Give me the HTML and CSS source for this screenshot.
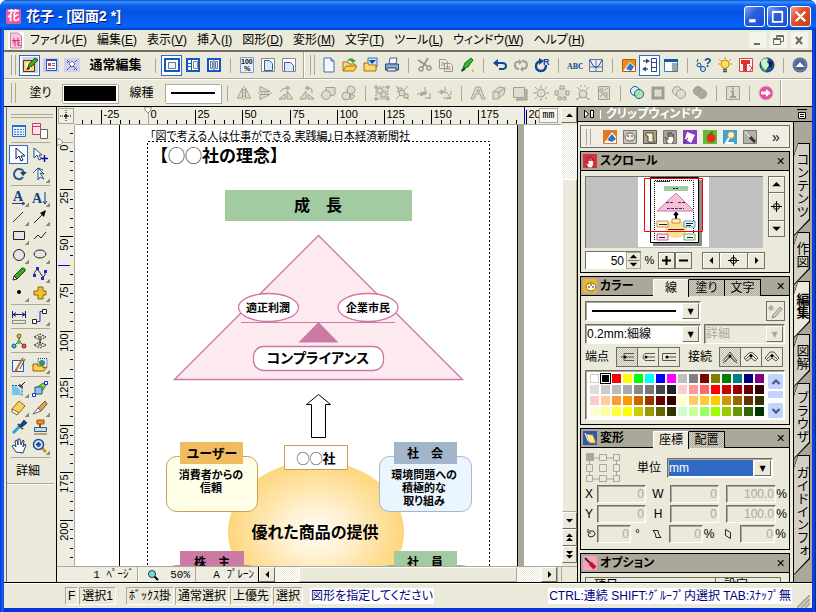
FILE: index.html
```html
<!DOCTYPE html>
<html lang="ja">
<head>
<meta charset="utf-8">
<title>花子 - [図面2 *]</title>
<link rel="stylesheet" href="styles.css">
</head>
<body>
<div class="window">
  <header class="titlebar">
    <span class="app-icon">花</span>
    <h1>花子 - [図面2 *]</h1>
    <div class="captions">
      <button class="cap" aria-label="最小化"><svg viewBox="0 0 16 16"><path d="M3 12h6" stroke="#fff" stroke-width="3"/></svg></button>
      <button class="cap" aria-label="最大化"><svg viewBox="0 0 16 16"><path d="M3.5 4v9h9V4zM3 3.5h10" fill="none" stroke="#fff" stroke-width="1.6"/></svg></button>
      <button class="cap cap-close" aria-label="閉じる"><svg viewBox="0 0 16 16"><path d="M3.500 3.500l9 9m0-9l-9 9" stroke="#fff" stroke-width="2.2"/></svg></button>
    </div>
  </header>

  <nav class="menubar">
    <span class="doc-icon"><svg viewBox="0 0 16 16"><path d="M2.500 .5h8l3 3v12h-11z" fill="#f9c9e2" stroke="#b58aa0"/><path d="M4 8h8M6 5v5m4-5v5M5 11l3-3m-1 6V9m3 0v4h3m-1-3l-3 2" stroke="#e8287d" fill="none"/></svg></span>
    <button>ファイル(<u>F</u>)</button>
    <button>編集(<u>E</u>)</button>
    <button>表示(<u>V</u>)</button>
    <button>挿入(<u>I</u>)</button>
    <button>図形(<u>D</u>)</button>
    <button>変形(<u>M</u>)</button>
    <button>文字(<u>T</u>)</button>
    <button>ツール(<u>L</u>)</button>
    <button>ウィンドウ(<u>W</u>)</button>
    <button>ヘルプ(<u>H</u>)</button>
    <div class="mdi">
      <button aria-label="文書を最小化"><svg viewBox="0 0 16 16"><path d="M5 12h6" stroke="#6b6a60" stroke-width="2"/></svg></button>
      <button aria-label="文書を元に戻す"><svg viewBox="0 0 16 16"><path d="M6.500 6V3.500h7v6H11M3.500 6.500h7v6h-7zM6 4.500h7M4 7.500h6" fill="none" stroke="#6b6a60"/></svg></button>
      <button aria-label="文書を閉じる"><svg viewBox="0 0 16 16"><path d="M5 5l6 7m0-7l-6 7" stroke="#6b6a60" stroke-width="2"/></svg></button>
    </div>
  </nav>

  <div class="toolbar toolbar-main">
    <i class="grip"></i>
    <button class="tb on" aria-label="編集モード"><svg viewBox="0 0 16 16"><path d="M0 0h16v16H0z" fill="#d5cdee"/><path d="M1.500 3.500h11v11h-11z" fill="#f6d66b" stroke="#443c20"/><path d="M4 6h5v6H4z" fill="#fff3bd"/><path d="M6 11l1-4 6-6 3 2-6 6z" fill="#3fae28" stroke="#17500c"/><path d="M4 13l2-3 2 2z" fill="#402"/></svg></button>
    <button class="tb" aria-label="表示モード"><svg viewBox="0 0 16 16"><path d="M0 1h16v14H0z" fill="#cfc6ef"/><path d="M3.500 2.500h10v11h-10z" fill="#fff" stroke="#2950b0"/><path d="M3 3h11" stroke="#2950b0" stroke-width="2"/><path d="M5 6h3v3H5z" fill="#e2403c"/><path d="M9 6.500h3M9 8.500h3M5 11.500h7" stroke="#456cc0"/></svg></button>
    <button class="tb" aria-label="図形モード"><svg viewBox="0 0 16 16"><path d="M0 1h16v14H0z" fill="#d5cdee"/><path d="M3 3l10 10M13 3L3 13M3 6l3-3M10 13l3-3" stroke="#2c569a" stroke-dasharray="3 1" fill="none"/><path d="M5 7l3-3 3 3-3 3z" fill="#fff" stroke="#567ab4"/></svg></button>
    <strong class="mode">通常編集</strong>
    <i class="sep"></i>
    <button class="tb on" aria-label="標準表示"><svg viewBox="0 0 16 16"><path d="M1 2h14v12H1z" fill="#fff" stroke="#1257c9" stroke-width="2"/><path d="M4.500 5.500h7v6h-7z" fill="#e6f0ff" stroke="#777"/></svg></button>
    <button class="tb" aria-label="見開き表示"><svg viewBox="0 0 16 16"><path d="M2 2h12v12H2z" fill="#fff" stroke="#1257c9" stroke-width="2"/><path d="M6.500 3v10M3 6.500h3M3 9.500h3" stroke="#1257c9"/><path d="M8.500 4.500h4v7h-4z" fill="#e6f0ff" stroke="#888"/></svg></button>
    <button class="tb" aria-label="二分割表示"><svg viewBox="0 0 16 16"><path d="M2 2h12v12H2z" fill="#fff" stroke="#1257c9" stroke-width="2"/><path d="M4.500 4.500h2v7h-2zM9.500 4.500h2v7h-2z" fill="#e6f0ff" stroke="#777"/><path d="M8 3v10" stroke="#1257c9"/></svg></button>
    <i class="sep"></i>
    <button class="tb" aria-label="100%表示"><svg viewBox="0 0 16 16"><path d="M1.500 .5h13v15h-13z" fill="#e4eefc" stroke="#7ea0c0"/><text x="2" y="7" font-size="7" font-weight="700" fill="#111">100</text><text x="5" y="14" font-size="7" font-weight="700" fill="#111">%</text></svg></button>
    <button class="tb" aria-label="全体表示"><svg viewBox="0 0 16 16"><path d="M1.500 1.500h13v13h-13z" fill="#fff" stroke="#888"/><path d="M4.500 3.500h5l3 3v7h-8z" fill="#dbe9fb" stroke="#31629f"/></svg></button>
    <button class="tb" aria-label="幅で表示"><svg viewBox="0 0 16 16"><path d="M1.500 1.500h13v13h-13z" fill="#fff" stroke="#888"/><path d="M3.500 14V5.500h6l3 3V14" fill="#dbe9fb" stroke="#31629f"/></svg></button>
    <i class="edge"></i>
    <i class="grip"></i>
    <button class="tb" aria-label="新規作成"><svg viewBox="0 0 16 16"><path d="M3 1h7l3 3v11H3z" fill="#f4f9ff" stroke="#3a6cb4"/><path d="M10 1v3h3" fill="#a9c6ea" stroke="#3a6cb4"/></svg></button>
    <button class="tb" aria-label="開く"><svg viewBox="0 0 16 16"><path d="M1 14V5h5l1 2h6v3" fill="#f7dd83" stroke="#a86c1c"/><path d="M1 14l3-5h11l-3 5z" fill="#ffd149" stroke="#a86c1c"/><path d="M5 4c2-4 6-3 7-1h2l-3 3-3-3h2" fill="#35a22b"/></svg></button>
    <button class="tb" aria-label="保存"><svg viewBox="0 0 16 16"><path d="M5 1h9v9H5z" fill="#cfe4ff" stroke="#3f72b8"/><path d="M6 3l3 4 4-4z" fill="#0a4c9c"/><path d="M1 14V6h4l1 2h7v6z" fill="#ffd866" stroke="#a86c1c"/></svg></button>
    <button class="tb" aria-label="印刷"><svg viewBox="0 0 16 16"><path d="M5 7l1-6h7l-1 6z" fill="#eff5ff" stroke="#4467a0"/><path d="M1.500 7h13v6h-13z" fill="#8da8cf" stroke="#2d4673"/><path d="M3 11h9v3H3z" fill="#e9f0fb" stroke="#2d4673"/></svg></button>
    <i class="sep"></i>
    <button class="tb" aria-label="切り取り"><svg viewBox="0 0 16 16"><path d="M1 3l9 6M5 11l6-10" stroke="#9b988b" stroke-width="2"/><circle cx="4" cy="12" r="2" fill="none" stroke="#9b988b" stroke-width="1.5"/><circle cx="12" cy="11" r="2" fill="none" stroke="#9b988b" stroke-width="1.5"/></svg></button>
    <button class="tb" aria-label="コピー"><svg viewBox="0 0 16 16"><path d="M1.500 2.500h6l2 2v7h-8zM6.500 6.500h6l2 2v6h-8z" fill="#eceadf" stroke="#9b988b"/><path d="M3 6h4M3 8h3M8 10h4M8 12h5" stroke="#9b988b"/></svg></button>
    <button class="tb" aria-label="書式取得"><svg viewBox="0 0 16 16"><path d="M4 11l2-5 6-5 2 2-5 7z" fill="#3cb436" stroke="#17701a"/><path d="M2 13l3-3 2 2-4 3z" fill="#125c18"/><path d="M13 12l2 2-2 1z" fill="#e0a010"/></svg></button>
    <i class="sep"></i>
    <button class="tb" aria-label="元に戻す"><svg viewBox="0 0 16 16"><path d="M3 6h7q4 0 4 3t-4 3H7" fill="none" stroke="#0b4b94" stroke-width="2"/><path d="M1 6l5-4v8z" fill="#0b4b94"/></svg></button>
    <button class="tb" aria-label="やり直し"><svg viewBox="0 0 16 16"><path d="M7 5Q2 4 2 8t4 4m3-8q5 0 5 4t-5 4" fill="none" stroke="#a19e91" stroke-width="2"/><path d="M6 2l3 3-3 3zM10 9v6l-3-3z" fill="#a19e91"/></svg></button>
    <button class="tb" aria-label="再実行"><svg viewBox="0 0 16 16"><path d="M7 4Q2 5 2 9q0 5 5 5t5-6" fill="none" stroke="#0b4b94" stroke-width="2.4"/><path d="M5 1l5 3-5 4z" fill="#0b4b94"/><text x="9" y="8" font-size="9" font-weight="700" fill="#0b4b94">R</text></svg></button>
    <i class="sep"></i>
    <button class="tb" aria-label="スペルチェック"><svg viewBox="0 0 18 16"><text x="0" y="12" class="serif" font-size="9" font-weight="700" fill="#0b4b94">ABC</text></svg></button>
    <button class="tb" aria-label="グラフ"><svg viewBox="0 0 16 16"><path d="M1.500 2.500h13v12h-13z" fill="#e9eef5" stroke="#68788c"/><path d="M8 3v11M2 10h12" stroke="#68788c"/><path d="M2 3q6 15 12 0" fill="none" stroke="#0b4b94"/></svg></button>
    <i class="sep"></i>
    <button class="tb" aria-label="クリップ"><svg viewBox="0 0 16 16"><path d="M1.500 2.500h13v12h-13z" fill="#f08a1c" stroke="#b75a04"/><path d="M2 14L9 5l5 5v4z" fill="#fff"/><path d="M5 12l4-6 4 4-3 4z" fill="#2c75cf"/></svg></button>
    <button class="tb on" aria-label="パネル切替"><svg viewBox="0 0 16 16"><path d="M9.500 1.500h5v13h-5zM9 5.500h6M9 10.500h6" fill="#fff" stroke="#264b88"/><path d="M1 4h4m1 8H3" stroke="#111"/><path d="M4 1.500L8 4 4 6.500zM4 9.500L0 12l4 2.500z" fill="#264b88"/></svg></button>
    <button class="tb" aria-label="ウィンドウ表示"><svg viewBox="0 0 16 16"><path d="M1.500 2.500h13v12h-13z" fill="#fff" stroke="#3977c6"/><path d="M1 3.500h14" stroke="#0d58ba" stroke-width="3"/><path d="M9 6h5v8H9z" fill="#a6a6a0"/></svg></button>
    <i class="sep"></i>
    <button class="tb" aria-label="ヘルプ"><svg viewBox="0 0 16 16"><path d="M1 5l1-3m0 5l5 4" stroke="#0b4b94" fill="none"/><circle cx="3" cy="8" r="2" fill="#cfe6fb" stroke="#0b4b94"/><circle cx="7" cy="12" r="2.500" fill="#cfe6fb" stroke="#0b4b94"/><text x="8" y="10" font-size="12" font-weight="700" fill="#0b4b94">?</text></svg></button>
    <button class="tb" aria-label="ヒント"><svg viewBox="0 0 16 16"><path d="M8 3q4 0 4 4 0 2-2 4H6q-2-2-2-4 0-4 4-4z" fill="#ffe34a" stroke="#c77e08"/><path d="M8 0v2M2 2l2 2m10-2l-2 2M1 7h2m12 0h-2" stroke="#e29110"/><path d="M6 12.500h4M6 14.500h4" stroke="#44505f" stroke-width="1.5"/></svg></button>
    <button class="tb" aria-label="チュートリアル"><svg viewBox="0 0 16 16"><path d="M1.500 1.500h13v13h-13z" fill="#fff" stroke="#d04444"/><path d="M3 3h9v4H9v7H5V7H3z" fill="#e32c33"/><path d="M11 8l3 3-2 3" fill="none" stroke="#e32c33"/></svg></button>
    <button class="tb" aria-label="インターネット"><svg viewBox="0 0 16 16"><circle cx="8" cy="8" r="7" fill="#1c56a8" stroke="#143c66"/><path d="M2 4q4-4 7-2L8 5l2 3-3 5q-5-2-5-9z" fill="#c9f3c2"/><path d="M10 3l4 3-2 5-2-2z" fill="#123"/><path d="M3 9l4 5-1 1-4-4z" fill="#55b849"/></svg></button>
    <i class="sep"></i>
    <button class="tb" aria-label="たたむ"><svg viewBox="0 0 16 16"><circle cx="8" cy="8" r="7.500" fill="#4d648f"/><circle cx="8" cy="8" r="6" fill="none" stroke="#7d90b4"/><path d="M3.500 10L8 5l4.500 5z" fill="#fff"/></svg></button>
  </div>

  <div class="toolbar toolbar-attr">
    <i class="grip"></i>
    <span class="lbl lbl-fill">塗り</span>
    <button class="sample sample-fill" aria-label="塗りの色"></button>
    <span class="lbl">線種</span>
    <button class="sample sample-line" aria-label="線の種類"></button>
    <i class="sep"></i>
    <button class="tb gray" aria-label="左右反転"><svg viewBox="0 0 16 16"><path d="M6.500 3v10h-5zM9.500 3v10h5z"/><path d="M8 1v14" stroke-dasharray="2 1"/></svg></button>
    <button class="tb gray" aria-label="上下反転"><svg viewBox="0 0 16 16"><path d="M3 6.500V1.500l10 5zM3 9.500v5l10-5z"/><path d="M1 8h14" stroke-dasharray="2 1"/></svg></button>
    <button class="tb gray" aria-label="左回転"><svg viewBox="0 0 16 16"><path d="M9 14V6l6 8zM1 14h6V9z"/><path d="M3 7q0-4 6-4M9 1v4l3-2z"/></svg></button>
    <button class="tb gray" aria-label="右回転"><svg viewBox="0 0 16 16"><path d="M7 14V6l-6 8zM9 14h6l-6-5z"/><path d="M13 8q1-6-5-5M9 1L6 3l3 2z"/></svg></button>
    <button class="tb gray" aria-label="前面へ"><svg viewBox="0 0 16 16"><path d="M6 2.500h9v7l-3 1H6z"/><circle cx="6" cy="10" r="4.500"/></svg></button>
    <button class="tb gray" aria-label="背面へ"><svg viewBox="0 0 16 16"><circle cx="10" cy="5" r="4"/><circle cx="5" cy="11" r="4"/><path d="M9 9l5 2-4 4z"/></svg></button>
    <i class="sep"></i>
    <button class="tb gray" aria-label="合成"><svg viewBox="0 0 16 16"><path d="M2 2h12v12H2z" stroke-dasharray="2 1"/><circle cx="6" cy="6" r="3"/><path d="M7 7h5v5H7zM1 1h2v2H1zM13 1h2v2h-2zM1 13h2v2H1zM13 13h2v2h-2z"/></svg></button>
    <button class="tb gray" aria-label="合成解除"><svg viewBox="0 0 16 16"><path d="M3 3h4v4H3zM9 9h4v4H9zM1 1l2 2m10-2l-4 4m-8 9l4-4m9 5l-3-3"/><circle cx="7" cy="8" r="3"/></svg></button>
    <button class="tb gray" aria-label="左揃え"><svg viewBox="0 0 16 16"><path d="M1 9h6M5 7l3 2-3 2zM9 2v8M7 7l2 3 2-3zM14 8v6M9 13h5"/></svg></button>
    <button class="tb gray" aria-label="下揃え"><svg viewBox="0 0 16 16"><path d="M1 7h5M4 5l3 2-3 2zM8 2v6h3M6 13h8M11 9l3 4-4 1M14 6v4"/></svg></button>
    <i class="sep"></i>
    <button class="tb gray" aria-label="文字変形"><svg viewBox="0 0 16 16"><path d="M1 14l5-12h4l5 12h-3l-2-5H6l-2 5zM7 7h3L8 4z"/></svg></button>
    <button class="tb gray" aria-label="立体"><svg viewBox="0 0 16 16"><path d="M2 7l6-5 6 1-1 6-6 5H2zM2 7h6v6M8 7l6-4"/></svg></button>
    <button class="tb gray" aria-label="影"><svg viewBox="0 0 16 16"><path d="M4 14.500h10.500V4" stroke-width="2"/><path d="M1.500 2.500h11v10h-11z"/></svg></button>
    <button class="tb gray" aria-label="明るさ"><svg viewBox="0 0 16 16"><circle cx="8" cy="8" r="4"/><path d="M8 0v3m0 10v3M0 8h3m10 0h3M2 2l2 2m8 8l2 2M14 2l-2 2M4 12l-2 2"/></svg></button>
    <button class="tb gray" aria-label="円形配置"><svg viewBox="0 0 16 16"><circle cx="8" cy="8" r="5" stroke-dasharray="2 2"/><path d="M6 1h4v3H6zM1 6h3v4H1zM12 6h3v4h-3zM4 12h3v3H4zM9 12h3v3H9z"/></svg></button>
    <button class="tb gray" aria-label="放射"><svg viewBox="0 0 16 16"><circle cx="8" cy="9" r="4"/><path d="M2 2l3 3M14 2l-3 3M2 15l3-3m9 3l-3-3M5 1h2m2 0h2M1 14h2m10 0h2"/></svg></button>
    <button class="tb gray" aria-label="散布"><svg viewBox="0 0 16 16"><path d="M2.500 1.500h11v13h-11z"/><path d="M4 4h3v3H4zM8 8h3v3H8zM4 12l3-4m2-3l3-2m-2 10l2-1"/></svg></button>
    <i class="sep"></i>
    <button class="tb" aria-label="型抜き"><svg viewBox="0 0 16 16"><circle cx="6" cy="6" r="4.500" fill="#d8ecf4" stroke="#185f9d"/><circle cx="10" cy="9" r="4.500" fill="#a5e2ad" fill-opacity=".8" stroke="#185f9d"/></svg></button>
    <button class="tb gray" aria-label="枠"><svg viewBox="0 0 16 16"><path d="M3 3h10v10H3z" stroke-width="3"/></svg></button>
    <button class="tb gray" aria-label="交差"><svg viewBox="0 0 16 16"><circle cx="6" cy="6" r="4.500"/><circle cx="10" cy="9" r="4.500"/></svg></button>
    <button class="tb gray solid" aria-label="結合"><svg viewBox="0 0 16 16"><circle cx="6" cy="6" r="4.500"/><circle cx="10" cy="9" r="4.500"/></svg></button>
    <i class="sep"></i>
    <button class="tb gray" aria-label="情報"><svg viewBox="0 0 16 16"><path d="M1.500 1.500h13v13h-13z"/><path d="M6 6.500h2v5M5 12h6M7 3.500h2" stroke-width="2"/></svg></button>
    <i class="sep"></i>
    <button class="tb" aria-label="次へ"><svg viewBox="0 0 16 16"><circle cx="8" cy="8" r="7" fill="#e94b9b" stroke="#c8c0d0"/><path d="M3 6.500h5V4l5 4-5 4V9.500H3z" fill="#fff"/></svg></button>
    <i class="edge"></i>
  </div>

  <main class="main">
    <aside class="tools">
      <i class="tgrip"></i>
      <div class="pair">
        <button aria-label="部品"><svg viewBox="0 0 16 16"><path d="M1.500 2.500h13v11h-13z" fill="#e8f2ff" stroke="#2e6dc4"/><path d="M1 3h14" stroke="#2e6dc4" stroke-width="2"/><path d="M3 6.500h10M3 9h10M3 11.500h10" stroke="#2e6dc4" stroke-dasharray="2 1"/></svg></button>
        <button aria-label="スタイル"><svg viewBox="0 0 16 16"><path d="M.5.5h8v11h-8zM.5 3.500h8" fill="#fbe3ea" stroke="#c9386e"/><path d="M8.500 6.500h7v9h-7z" fill="#fff" stroke="#666"/></svg></button>
      </div>
      <i class="tsep"></i>
      <div class="pair">
        <button class="on" aria-label="選択"><svg viewBox="0 0 16 16"><path d="M5 1v11l3-3 2 5 2-1-2-4h4z" fill="#fff" stroke="#111c55"/></svg></button>
        <button aria-label="追加選択"><svg viewBox="0 0 16 16"><path d="M2 1v10l3-3 2 5 2-1-2-4h3z" fill="#fff" stroke="#27518a"/><path d="M12.500 8v7M9 11.500h7" stroke="#101090" stroke-width="1.500"/></svg></button>
        <button aria-label="回転"><svg viewBox="0 0 16 16"><path d="M12 11q-2 3-5 2-4-1-4-5 1-5 5-5 4 0 5 4" fill="none" stroke="#2a5b8d" stroke-width="2"/><path d="M9 6h7l-4 4z" fill="#143f70"/></svg></button>
        <button class="more" aria-label="節点"><svg viewBox="0 0 16 16"><path d="M1 7l5-5 5 2M6 2v12l2-3 4 2-4-6 4 1z" fill="#fff" stroke="#27518a"/></svg></button>
      </div>
      <i class="tsep"></i>
      <div class="pair">
        <button class="more" aria-label="横文字"><svg viewBox="0 0 16 16"><text x="2" y="11" class="serif" font-size="14" font-weight="700" fill="#154080">A</text><path d="M1 13.500h12M11 12l3 1.500-3 1.500" stroke="#154080" fill="none"/></svg></button>
        <button class="more" aria-label="縦文字"><svg viewBox="0 0 16 16"><text x="0" y="13" class="serif" font-size="14" font-weight="700" fill="#154080">A</text><path d="M13 2v11M11 11l2 3 2-3" stroke="#154080" fill="none"/></svg></button>
        <button class="more" aria-label="直線"><svg viewBox="0 0 16 16"><path d="M2 13L12 3" stroke="#333"/></svg></button>
        <button class="more" aria-label="矢印"><svg viewBox="0 0 16 16"><path d="M2 14L11 5" stroke="#222"/><path d="M14 1L8 4l4 4z"/></svg></button>
        <button class="more" aria-label="長方形"><svg viewBox="0 0 16 16"><path d="M2.500 3.500h11v8h-11z" fill="#e4e4e4" stroke="#222"/></svg></button>
        <button aria-label="折れ線"><svg viewBox="0 0 16 16"><path d="M2 11l4-4 3 3 5-6" fill="none" stroke="#222"/></svg></button>
        <button class="more" aria-label="円"><svg viewBox="0 0 16 16"><circle cx="8" cy="8" r="5.500" fill="#e4e4e4" stroke="#222"/></svg></button>
        <button class="more" aria-label="楕円"><svg viewBox="0 0 16 16"><ellipse cx="8" cy="7" rx="6" ry="4" fill="#e4e4e4" stroke="#222"/></svg></button>
        <button aria-label="鉛筆"><svg viewBox="0 0 16 16"><path d="M3 10l8-8q4 0 3 3l-8 8z" fill="#3ea52f" stroke="#174d12"/><path d="M2 14l1-4 3 3z" fill="#fff" stroke="#222"/></svg></button>
        <button class="more" aria-label="曲線"><svg viewBox="0 0 16 16"><path d="M2 9q1-6 4-5l5 7q3-1 2-6" fill="none" stroke="#333"/><path d="M1 8h3v3H1zM4 1h3v3H4zM12 4h3v3h-3zM9 11h3v3H9z" fill="#2424e0"/></svg></button>
        <button class="more" aria-label="点"><svg viewBox="0 0 16 16"><circle cx="8" cy="7" r="2"/></svg></button>
        <button class="more" aria-label="図形部品"><svg viewBox="0 0 16 16"><path d="M6 2h5v4h3v4h-3v4H6v-4H2V6h4z" fill="#f4c32c" stroke="#93620a"/></svg></button>
      </div>
      <i class="tsep"></i>
      <div class="pair">
        <button aria-label="寸法線"><svg viewBox="0 0 16 16"><path d="M1.500 2v7M14.500 2v7M2 5.500h12M5 3.500l-3 2 3 2m6-4l3 2-3 2" stroke="#16207d" fill="none"/><path d="M1.500 11.500h13v3h-13z" fill="none" stroke="#333" stroke-dasharray="1 1"/></svg></button>
        <button class="more" aria-label="連結線"><svg viewBox="0 0 16 16"><path d="M4 12.500h4v-10h4" fill="none" stroke="#2424e0"/><path d="M.5 10.500h4v4h-4zM10.500.5h4v4h-4z" fill="#fff" stroke="#222"/></svg></button>
      </div>
      <i class="tsep"></i>
      <div class="pair">
        <button aria-label="ツリー"><svg viewBox="0 0 16 16"><path d="M8 3v5l-5 5m5-5l5 5" stroke="#333" fill="none"/><circle cx="8" cy="3" r="2" fill="#e9b93b" stroke="#7c5d14"/><circle cx="3" cy="13" r="2" fill="#4bb2dd" stroke="#185c7c"/><circle cx="13" cy="13" r="2" fill="#e05d6e" stroke="#7c1d29"/><circle cx="8" cy="9" r="2" fill="#4eb84b"/></svg></button>
        <button aria-label="階層"><svg viewBox="0 0 16 16"><path d="M2 4l6-3 6 3-6 3zM2 12l6-3 6 3-6 3z" fill="none" stroke="#222" stroke-dasharray="2 1"/><path d="M8 5v6M6 4h4M6 12h4" stroke="#222"/></svg></button>
      </div>
      <i class="tsep"></i>
      <div class="pair">
        <button aria-label="ペイント"><svg viewBox="0 0 16 16"><path d="M1.500 3.500h11v11h-11z" fill="#eef4fb" stroke="#275b9b"/><path d="M5 13L12 1" stroke="#c97422" stroke-width="2"/><path d="M4 12l3 2-3 1z" fill="#d13b3b"/><path d="M9 12l5-10" stroke="#395f91"/></svg></button>
        <button class="more" aria-label="画像枠"><svg viewBox="0 0 16 16"><path d="M6 1.500h9v9H6z" fill="none" stroke="#2424e0" stroke-dasharray="1 1"/><circle cx="10" cy="6" r="3" fill="#2b9b5a"/><path d="M1 14V7h4l1 2h5v2l4-1-3 4z" fill="#ffd24c" stroke="#98610b"/></svg></button>
      </div>
      <i class="tsep"></i>
      <div class="pair">
        <button class="more" aria-label="面取り"><svg viewBox="0 0 16 16"><path d="M1 5q9 0 9 9H1z" fill="#6fc7ef"/><path d="M1 4.500h10v10" fill="none" stroke="#1a4f8a" stroke-dasharray="2 1"/><path d="M14 1L9 6m0-3v3h3" stroke="#111" fill="none"/></svg></button>
        <button aria-label="変形"><svg viewBox="0 0 16 16"><path d="M3 8l8-6 3 2-5 8z" fill="#8ecf4f" stroke="#41721a"/><path d="M3 6h7v7H3z" fill="#8dc6e6" stroke="#235a7d"/><path d="M.5 12.500h3v3h-3zM12.500.5h3v3h-3z" fill="#fff" stroke="#2424e0"/></svg></button>
        <button class="more" aria-label="消しゴム"><svg viewBox="0 0 16 16"><path d="M1 9l7-8 6 5-7 8z" fill="#f9d45c" stroke="#8b671a"/><path d="M1 9v3l5 3 1-1V12z" fill="#fff" stroke="#8b671a"/></svg></button>
        <button class="more" aria-label="カッター"><svg viewBox="0 0 16 16"><path d="M6 8l7-7 2 3-6 7z" fill="#d9a55b" stroke="#7d5621"/><path d="M1 14l5-6 3 3z" fill="#fff" stroke="#666"/></svg></button>
        <button aria-label="スポイト"><svg viewBox="0 0 16 16"><path d="M2 14l7-7" stroke="#29a9c8" stroke-width="3"/><path d="M7 5l5 5M9 7l4-5 2 2-5 4z" stroke="#1d4174" stroke-width="2" fill="#2d5e9c"/></svg></button>
        <button aria-label="スタンプ"><svg viewBox="0 0 16 16"><path d="M5 1h7v4H5z" fill="#f38f31" stroke="#9f4e0b"/><path d="M8 5v4" stroke="#9f4e0b" stroke-width="2"/><path d="M2.500 8.500h12v4h-12z" fill="#bfe0f2" stroke="#2b5c83"/><path d="M2 15h13" stroke="#8a5428"/></svg></button>
        <button aria-label="手のひら"><svg viewBox="0 0 16 16"><path d="M5 14L1 8l2-1 2 2-1-6 2-1 1 5V1h2l1 6 2-5 1 1-1 6 2-3 1 1-3 8z" fill="#fff" stroke="#22406f"/></svg></button>
        <button class="more" aria-label="ズーム"><svg viewBox="0 0 16 16"><path d="M9 9l5 5" stroke="#d89125" stroke-width="3"/><circle cx="6.500" cy="6.500" r="5" fill="#d4e8fb" stroke="#1f4a88" stroke-width="1.500"/><path d="M6.500 4v5M4 6.500h5" stroke="#14409a" stroke-width="2"/></svg></button>
      </div>
      <i class="tsep"></i>
      <button class="detail">詳細</button>
      <i class="tend"></i>
    </aside>

    <section class="editor">
      <button class="origin" aria-label="原点"><svg viewBox="0 0 14 14"><path d="M1 7h12M7 1v12" stroke="#000" stroke-dasharray="1 1"/><path d="M5 7h4M7 5v4" stroke="#000"/></svg></button>
      <div class="hruler"><svg id="hruler"></svg><button class="unit">mm</button></div>
      <button class="sb up" aria-label="上へ"><svg viewBox="0 0 9 9"><path d="M1 6h7L4.500 2.500z"/></svg></button>
      <div class="vruler"><svg id="vruler"></svg></div>
      <div class="canvas">
        <svg class="drawing">
          <defs><radialGradient id="glow"><stop offset="0" stop-color="#fffdf8"/><stop offset=".35" stop-color="#fff1d2"/><stop offset="1" stop-color="#fed67b"/></radialGradient></defs>
          <g transform="translate(-75 -125)">
            <path d="M119.500 125v900" stroke="#000"/>
            <path d="M517.500 125v900" stroke="#000"/>
            <path d="M521 125v900" stroke="#aca899" stroke-width="6"/>
            <path d="M147.500 1025V141.500H489.500V1025" fill="none" stroke="#000" stroke-dasharray="2 2"/>
            <text x="150" y="140" font-size="11">「図で考える人は仕事ができる 実践編」日本経済新聞社</text>
            <text class="full" x="151" y="162" font-size="17" font-weight="700">【<tspan font-weight="400">◯◯</tspan>社の理念】</text>
            <path d="M225 190h187v31H225z" fill="#a2cba2"/>
            <text class="mid" x="318" y="211" font-size="16">成　長</text>
            <path d="M318.500 235.500L462.500 379.500H174.500z" fill="#fdeaf0" stroke="#cc79a4" stroke-width="1.400"/>
            <path d="M241 322.500h154" stroke="#cc79a4"/>
            <g fill="#fff" stroke="#cc79a4" stroke-width="1.300"><ellipse cx="268.500" cy="307.500" rx="30" ry="14"/><ellipse cx="368" cy="307.500" rx="30" ry="14"/><rect x="253.500" y="346.500" width="130" height="24" rx="10"/></g>
            <path d="M318.500 322l20 20.500h-40z" fill="#cb7ba3"/>
            <text class="mid" x="268" y="312" font-size="11">適正利潤</text>
            <text class="mid" x="368" y="312" font-size="11">企業市民</text>
            <text class="mid" x="318" y="363" font-size="14">コンプライアンス</text>
            <path d="M318.500 394.500l12 10h-5v33h-14v-33h-5z" fill="#fff" stroke="#000"/>
            <ellipse cx="316" cy="532" rx="88" ry="71" fill="url(#glow)"/>
            <path d="M284.500 445.500h63v24h-63z" fill="#fff" stroke="#c8a050"/>
            <text class="mid full" x="316" y="463" font-size="13"><tspan font-weight="400">◯◯</tspan>社</text>
            <rect x="166.500" y="456.500" width="91" height="55" rx="10" fill="#fffee9" stroke="#c8a050"/>
            <path d="M180 442h63v22h-63z" fill="#f0bb60"/>
            <text class="mid" x="212" y="458" font-size="13">ユーザー</text>
            <text class="mid" x="211" y="479" font-size="11">消費者からの</text>
            <text class="mid" x="211" y="492" font-size="11">信頼</text>
            <rect x="379.500" y="456.500" width="92" height="55" rx="10" fill="#eaf5fe" stroke="#a4b7d0"/>
            <path d="M394 442h63v22h-63z" fill="#a2b5ca"/>
            <text class="mid" x="425" y="458" font-size="12">社　会</text>
            <text class="mid" x="424" y="479" font-size="11">環境問題への</text>
            <text class="mid" x="424" y="492" font-size="11">積極的な</text>
            <text class="mid" x="424" y="505" font-size="11">取り組み</text>
            <text class="mid" x="315" y="538" font-size="16">優れた商品の提供</text>
            <rect x="166.500" y="565.500" width="91" height="55" rx="10" fill="#fdeaf0" stroke="#cc79a4"/>
            <path d="M180 551h64v22h-64z" fill="#cb7ba3"/>
            <text class="mid" x="212" y="567" font-size="12">株　主</text>
            <rect x="379.500" y="565.500" width="92" height="55" rx="10" fill="#eef8ee" stroke="#8fbf90"/>
            <path d="M394 551h63v22h-63z" fill="#a2cba2"/>
            <text class="mid" x="425" y="567" font-size="12">社　員</text>
          </g>
        </svg>
      </div>
      <div class="vscroll">
        <i class="track"></i><i class="thumb"></i>
        <button class="sb" aria-label="下へ"><svg viewBox="0 0 9 9"><path d="M1 3h7L4.500 6.500z"/></svg></button>
        <button class="sb" aria-label="前ページ"><svg viewBox="0 0 9 9"><path d="M1 4h7L4.500.5zM1 8h7L4.500 4.500z"/></svg></button>
        <button class="sb" aria-label="次ページ"><svg viewBox="0 0 9 9"><path d="M1 1h7L4.500 4.500zM1 5h7L4.500 8.500z"/></svg></button>
      </div>
      <div class="hbar">
        <button class="page">1 ﾍﾟｰｼﾞ</button>
        <button class="zoom"><svg viewBox="0 0 12 12"><path d="M7 7l4 4" stroke="#000" stroke-width="2"/><circle cx="5" cy="5" r="3.500" fill="#6fe0e6" stroke="#333"/></svg><span>50%</span></button>
        <button class="layer">A ﾌﾟﾚｰﾝ</button>
        <button class="sb" aria-label="左へ"><svg viewBox="0 0 9 9"><path d="M6 1v7L2.500 4.500z"/></svg></button>
        <i class="track track-l"></i><i class="thumb"></i><i class="track track-r"></i>
        <button class="sb" aria-label="右へ"><svg viewBox="0 0 9 9"><path d="M3 1v7l3.500-3.500z"/></svg></button>
        <i class="split"></i>
      </div>
      <i class="corner"></i>
    </section>

    <aside class="side">
      <header class="side-head">
        <svg class="dock" viewBox="0 0 12 10"><path d="M1.500 1v8l4-4zM7.500 1.500h3v7h-3z" fill="#fff" stroke="#000"/></svg>
        <i></i><h2>クリップウィンドウ</h2>
        <svg class="pin" viewBox="0 0 10 10"><path d="M0 .5h10M1.500 3.500h7v6h-7zM3 5.500h4M3 7.500h4" fill="#fff" stroke="#000"/></svg>
      </header>
      <div class="side-body">
        <div class="panels">
          <div class="clips">
            <i class="grip"></i>
            <button aria-label="図形"><svg viewBox="0 0 14 14"><path d="M0 0h14v14H0z" fill="#e8761a"/><path d="M1 13L9 2l4 5v6z" fill="#fff"/><path d="M4 10l5-6 4 5-4 3z" fill="#2c75cf"/></svg></button>
            <button aria-label="パレット"><svg viewBox="0 0 14 14"><path d="M.5.5h13v13H.5z" fill="#c9c5b8" stroke="#777"/><ellipse cx="7" cy="7" rx="5" ry="4" fill="#f2e8d8" stroke="#665"/><circle cx="5" cy="6" r="1" fill="#c33"/><circle cx="9" cy="6" r="1" fill="#37b"/></svg></button>
            <button aria-label="用紙"><svg viewBox="0 0 14 14"><path d="M.5.5h13v13H.5z" fill="#aaa27f" stroke="#555"/><path d="M3 3h7v7l2 2H5V6H3z" fill="#fbf5dc" stroke="#544"/></svg></button>
            <button aria-label="手"><svg viewBox="0 0 14 14"><path d="M.5.5h13v13H.5z" fill="#a6a399" stroke="#777"/><path d="M2 7l3 3V3l1 4V2l2 5V2l2 5V4l1 6-2 4H5z" fill="#fff" stroke="#655"/></svg></button>
            <button aria-label="文書"><svg viewBox="0 0 14 14"><path d="M0 0h14v14H0z" fill="#8a3cc0"/><path d="M4 2l8 3-4 8-6-4z" fill="#fff"/><path d="M1 13l4-5" stroke="#333"/></svg></button>
            <button aria-label="果物"><svg viewBox="0 0 14 14"><path d="M0 0h14v14H0z" fill="#61bb33"/><circle cx="8" cy="8" r="4.500" fill="#e7301e"/><path d="M7 5q0-3 3-3" stroke="#541" fill="none"/></svg></button>
            <button aria-label="検索"><svg viewBox="0 0 14 14"><path d="M0 0h14v14H0z" fill="#38a5d8"/><circle cx="8" cy="5" r="3.500" fill="#fff3c9" stroke="#d8861b"/><path d="M6 8l-3 5h8" stroke="#fff" stroke-width="2" fill="none"/></svg></button>
            <button aria-label="工具"><svg viewBox="0 0 14 14"><path d="M.5.5h13v13H.5z" fill="#b3b0a4" stroke="#777"/><path d="M2 2l5 5" stroke="#fff"/><path d="M7 7l5 5" stroke="#333" stroke-width="3"/></svg></button>
            <span class="over">»</span>
          </div>

          <section class="panel">
            <header><svg class="pi" viewBox="0 0 14 14"><path d="M0 0h14v14H0z" fill="#d8303c"/><path d="M2 7l3 3V3l1 4V2l2 5V2l2 5V4l1 6-2 4H5z" fill="#fff3e0" stroke="#a24"/></svg><h3>スクロール</h3><button class="x" aria-label="閉じる">✕</button></header>
            <div class="body scroll-body">
              <div class="preview"><svg viewBox="0 0 178 70">
                <path d="M52 0h71v70H52z" fill="#fff"/>
                <path d="M67 3h49v66H67z" fill="#8a8a8a"/><path d="M64.500.5h48v65h-48z" fill="#fff" stroke="#000"/>
                <path d="M68.500 63V3.500h39V63" fill="none" stroke="#000" stroke-dasharray="1 1"/>
                <path d="M70 4.500h14" stroke="#345"/><path d="M78 9h24v5H78z" fill="#a2cba2"/><path d="M87 11.500h5" stroke="#111" stroke-dasharray="2 1"/>
                <path d="M90 16l18 18H71z" fill="#f4c1d6" stroke="#cc79a4"/><path d="M80 25.500h7M92 25.500h7M81 31.500h17" stroke="#527" stroke-dasharray="3 1"/>
                <path d="M90 36v6M88 38l2-2 2 2" fill="none" stroke="#000" stroke-width="2"/>
                <ellipse cx="90" cy="52" rx="11" ry="9" fill="#fddf94"/>
                <path d="M71 44h11v6H71z" fill="#fdf4d8" stroke="#d0892c"/><path d="M98 44h11v6H98z" fill="#e4f2fc" stroke="#6b93bd"/><path d="M86 42h8v4h-8z" fill="#fff5d6" stroke="#d0892c"/>
                <path d="M71 57h11v6H71z" fill="#fdeaf0" stroke="#cc5b92"/><path d="M98 57h11v6H98z" fill="#eef8ee" stroke="#6cac6e"/>
                <path d="M73 47.500h8M100 46.500h7M100 48.500h5M82 52.500h16M73 60.500h6M101 60.500h6" stroke="#223"/>
                <path d="M58.500 1.500h58v53h-58z" fill="none" stroke="#f00"/></svg></div>
              <div class="vnav">
                <button aria-label="上"><svg viewBox="0 0 9 9"><path d="M1 6h7L4.500 2.500z"/></svg></button>
                <button class="big" aria-label="中央"><svg viewBox="0 0 11 11"><path d="M5.500 0v11M0 5.500h11" stroke="#000"/><circle cx="5.500" cy="5.500" r="3" fill="none" stroke="#000"/></svg></button>
                <button aria-label="下"><svg viewBox="0 0 9 9"><path d="M1 3h7L4.500 6.500z"/></svg></button>
              </div>
              <div class="zoomrow">
                <div class="spin"><input id="zoomval" type="text" value="50" aria-label="倍率"><span><svg viewBox="0 0 11 14"><path d="M2 5h7L5.500 1.500zM2 9h7l-3.500 3.500z"/><path d="M0 7h11" stroke="#777"/></svg></span></div>
                <label for="zoomval">%</label>
                <button class="zb" aria-label="拡大"><svg viewBox="0 0 9 9"><path d="M0 4.500h9M4.500 0v9" stroke="#000" stroke-width="2"/></svg></button><button class="zb" aria-label="縮小"><svg viewBox="0 0 9 9"><path d="M0 4.500h9" stroke="#000" stroke-width="2"/></svg></button>
                <span class="hnav"><button aria-label="左"><svg viewBox="0 0 9 9"><path d="M6 1v7L2.500 4.500z"/></svg></button><button class="wide" aria-label="中心"><svg viewBox="0 0 11 11"><path d="M5.500 0v11M0 5.500h11" stroke="#000"/><circle cx="5.500" cy="5.500" r="3" fill="none" stroke="#000"/></svg></button><button aria-label="右"><svg viewBox="0 0 9 9"><path d="M3 1v7l3.500-3.500z"/></svg></button></span>
              </div>
            </div>
          </section>

          <section class="panel">
            <header><svg class="pi" viewBox="0 0 14 14"><path d="M0 0h14v14H0z" fill="#f0b529"/><ellipse cx="8" cy="8" rx="5" ry="4" fill="#fff7e4" stroke="#8b5a10"/><circle cx="6" cy="8" r="1" fill="#d33"/><circle cx="10" cy="8" r="1" fill="#28c"/><circle cx="8" cy="6" r="1" fill="#3a3"/></svg><h3>カラー</h3>
              <div class="ptabs"><button class="act">線</button><button>塗り</button><button>文字</button></div><button class="x" aria-label="閉じる">✕</button></header>
            <div class="body color-body">
              <div class="row">
                <div class="combo w116"><select class="line-sel" aria-label="線の形"><option></option></select></div>
                <button class="pen" aria-label="ペン設定"><svg viewBox="0 0 16 16"><path d="M6 12l7-8 2 2-7 8-3 1z" fill="#cfccc0" stroke="#8f8c80"/><path d="M4 2v6M1 5h6M2 3l4 4M6 3L2 7" stroke="#a5a296"/></svg></button>
              </div>
              <div class="row">
                <div class="combo w116"><select aria-label="線幅"><option>0.2mm:細線</option></select></div>
                <div class="combo off w81"><select aria-label="線の詳細" disabled><option>詳細</option></select></div>
              </div>
              <div class="row ends">
                <span>端点</span>
                <div class="seg">
                  <button class="down" aria-label="平ら"><svg viewBox="0 0 16 14"><path d="M15 3.500H5v7h10M5 7h10M2 7h5" fill="none" stroke="#555"/><circle cx="6" cy="7" r="1.500"/></svg></button>
                  <button aria-label="丸"><svg viewBox="0 0 16 14"><path d="M15 3.500H5q-4 3.500 0 7h10M5 7h10" fill="none" stroke="#555"/><circle cx="6" cy="7" r="1.500"/></svg></button>
                  <button aria-label="四角"><svg viewBox="0 0 16 14"><path d="M15 3.500H1.500v7H15M5 7h10" fill="none" stroke="#555"/><circle cx="6" cy="7" r="1.500"/></svg></button>
                </div>
                <span class="join">接続</span>
                <div class="seg">
                  <button class="down" aria-label="尖り"><svg viewBox="0 0 16 14"><path d="M1 11l7-9 7 9M1 13l7-6 7 6M3 12l5-7 5 7" fill="none" stroke="#555"/><circle cx="8" cy="6" r="1.500"/></svg></button>
                  <button aria-label="丸接続"><svg viewBox="0 0 16 14"><path d="M1 8l5-5q2-1 4 0l5 5-3 3-4-3-4 3zM2 10l6-6 6 6" fill="none" stroke="#555"/><circle cx="8" cy="6" r="1.500"/></svg></button>
                  <button aria-label="面接続"><svg viewBox="0 0 16 14"><path d="M1 8l5-6h4l5 6-3 3-4-3-4 3zM2 10l6-6 6 6" fill="none" stroke="#555"/><circle cx="8" cy="6" r="1.500"/></svg></button>
                </div>
              </div>
              <div class="palette">
                <div class="swatches" id="swatches"></div>
                <div class="xpbar"><button aria-label="色を上へ"><svg viewBox="0 0 10 10"><path d="M1.500 7L5 3.500 8.500 7" fill="none" stroke="#41567f" stroke-width="2"/></svg></button><i></i><button aria-label="色を下へ"><svg viewBox="0 0 10 10"><path d="M1.500 3L5 6.500 8.500 3" fill="none" stroke="#41567f" stroke-width="2"/></svg></button></div>
              </div>
            </div>
          </section>

          <section class="panel">
            <header><svg class="pi" viewBox="0 0 14 14"><path d="M0 0h14v14H0z" fill="#2758b5"/><path d="M3 3l7 1 3 8H6z" fill="#ffe49a" stroke="#a77c1a"/><path d="M2 2l3 8" stroke="#fff"/></svg><h3>変形</h3>
              <div class="ptabs"><button class="act">座標</button><button>配置</button></div><button class="x" aria-label="閉じる">✕</button></header>
            <div class="body coord-body">
              <div class="row unitrow">
                <svg class="anchor" viewBox="0 0 36 30"><path d="M5 5h27M5 26h27M4.500 5v20M31.500 5v20" stroke="#aca899"/><g fill="#ebe9da" stroke="#aca899"><path d="M14.500 1.500h7v6h-7zM28.500 1.500h6v6h-6zM1.500 11.500h6v7h-6zM14.500 11.500h7v7h-7zM28.500 11.500h6v7h-6zM1.500 22.500h6v6h-6zM14.500 22.500h7v6h-7zM28.500 22.500h6v6h-6z"/></g><path d="M1 0h8v8H1z" fill="#aca899"/></svg>
                <label for="unit">単位</label>
                <div class="combo unitsel w106"><select id="unit"><option>mm</option></select></div>
              </div>
              <div class="fields">
                <label for="fx">X</label><input id="fx" disabled value="0"><label for="fw">W</label><input id="fw" disabled value="0"><span></span><input id="fwp" aria-label="幅の比率" disabled value="100.0"><label for="fwp">%</label>
                <label class="first" for="fy">Y</label><input id="fy" disabled value="0"><label for="fh">H</label><input id="fh" disabled value="0"><span></span><input id="fhp" aria-label="高さの比率" disabled value="100.0"><label for="fhp">%</label>
              </div>
              <div class="fields angles">
                <label for="fr"><svg viewBox="0 0 10 10"><path d="M3 2h4q2 1 2 3t-4 3q-3 0-3-3M2 0v4h3" fill="none" stroke="#222"/></svg></label><input id="fr" disabled value="0"><span class="deg">°</span>
                <label for="fs"><svg viewBox="0 0 10 10"><path d="M1 1.500h5q0 4 3 7H4Q4 4 1 1.500z" fill="none" stroke="#222"/></svg></label><input id="fs" disabled value="0"><label for="fs">%</label>
                <label for="ft"><svg viewBox="0 0 10 10"><path d="M2.500.5l5 3v6l-5-3z" fill="none" stroke="#222"/></svg></label><input id="ft" disabled value="0"><label for="ft">%</label>
              </div>
            </div>
          </section>

          <section class="panel last">
            <header><svg class="pi" viewBox="0 0 14 14"><path d="M0 0h14v14H0z" fill="#f4a3c4"/><path d="M2 2l5 5" stroke="#333" stroke-width="2"/><path d="M7 7l5 5" stroke="#c3141f" stroke-width="4"/></svg><h3>オプション</h3><button class="x" aria-label="閉じる">✕</button></header>
            <div class="body"><table class="opts"><tr><th>項目</th><th>設定</th></tr></table></div>
          </section>
        </div>
        <nav class="vtabs">
          <button class="t1"><span>コンテンツ</span></button>
          <button class="t2"><span>作図</span></button>
          <button class="t3 act"><span>編集</span></button>
          <button class="t4"><span>図解</span></button>
          <button class="t5"><span>ブラウザ</span></button>
          <button class="t6"><span>ガイドインフォ</span></button>
        </nav>
      </div>
    </aside>
  </main>

  <footer class="status">
    <span class="cell">F</span><span class="cell gap">選択1</span>
    <span class="cell">ﾎﾞｯｸｽ掛</span><span class="cell">通常選択</span><span class="cell">上優先</span><span class="cell">選択</span>
    <span class="msg">図形を指定してください</span>
    <span class="msg hint">CTRL:連続 SHIFT:ｸﾞﾙｰﾌﾟ内選択 TAB:ｽﾅｯﾌﾟ無</span>
    <svg class="resize" viewBox="0 0 13 13"><path d="M0 13L13 0M4 13l9-9M8 13l5-5" stroke="#aca899" stroke-width="2"/></svg>
  </footer>
</div>
<script src="script.js"></script>
</body>
</html>
```
FILE: styles.css
```css
:root {
  --face: #ebe9da;
  --shade: #aca899;
  --dark: #716f64;
  --hatch: repeating-conic-gradient(#fff 0 25%, #ebe9da 0 50%) 0 0 / 2px 2px;
}
* { box-sizing: border-box; }
html, body { margin: 0; height: 100%; }
body {
  background: #fff;
  font: 12px/16px "Liberation Sans", "Noto Sans CJK JP", sans-serif;
  font-feature-settings: "palt";
  color: #000;
  overflow: hidden;
}
button, input, select { font: inherit; font-feature-settings: inherit; color: inherit; border: 0; margin: 0; padding: 0; background: none; border-radius: 0; }
h1, h2, h3 { margin: 0; font-size: 13px; }
i { display: block; flex: none; }
svg { display: block; }
.serif { font-family: "Liberation Serif", serif; }

.window {
  height: 100vh;
  display: grid;
  grid-template-columns: minmax(0, 1fr);
  grid-template-rows: 30px 20px 29px 27px minmax(0, 1fr) 25px;
  padding: 0 4px 4px;
  background: linear-gradient(90deg, #0831d9, #166aee 3px, #0831d9 4px calc(100% - 4px), #0a4fe0 calc(100% - 2px), #001da0);
  border-radius: 7px 7px 0 0;
  overflow: hidden;
}

.titlebar {
  margin: 0 -4px;
  padding: 0 5px 0 6px;
  display: flex;
  align-items: center;
  gap: 5px;
  background: linear-gradient(#0a4fd0, #3c92fb 2px, #0c62ee 5px, #0453e0 12px, #0560f4 22px, #0566fa 26px, #013fc0);
  color: #fff;
}
.titlebar h1 { text-shadow: 1px 1px #0a1883; flex: 1; padding-top: 2px; font-size: 14px; }
.app-icon { width: 15px; height: 15px; background: #f0559c; border-radius: 2px; font-size: 12px; line-height: 14px; font-weight: 700; text-align: center; margin-top: 2px; }
.captions { display: flex; gap: 2px; padding-top: 2px; }
.cap { width: 21px; height: 21px; border: 1px solid #fff; border-radius: 3px; background: linear-gradient(135deg, #7ea6f5, #2c5fdc 40%, #1c4fd0); }
.cap svg { width: 17px; height: 17px; margin: 1px; }
.cap-close { background: linear-gradient(135deg, #f0a28a, #e2532c 40%, #c8391a); }

.menubar { background: var(--face); display: flex; align-items: center; gap: 10px; padding-left: 4px; }
.menubar > button { white-space: nowrap; }
.doc-icon { margin-right: -4px; background: #fff; }
.doc-icon svg { width: 16px; height: 17px; }
.mdi { margin-left: auto; display: flex; gap: 4px; padding-right: 4px; }
.mdi button { width: 17px; height: 16px; background: #f5f4ec; }
.mdi svg { width: 16px; height: 16px; }

.toolbar { background: var(--face); display: flex; align-items: center; padding-left: 7px; overflow: hidden; }
.toolbar-main { border-top: 2px solid var(--dark); border-bottom: 1px solid var(--shade); }
.toolbar-attr { border-top: 1px solid #fff; }
.grip { width: 5px; height: 20px; border: solid var(--shade); border-width: 0 1px; margin-right: 3px; }
.tb { width: 21px; height: 21px; flex: none; display: grid; place-items: center; }
.tb svg { width: 16px; height: 16px; }
.tb.on { background: #fff; border: 1px solid #316ac5; }
.tb.gray svg { fill: #dfdccf; stroke: #a19e91; }
.tb.gray.solid svg { fill: #aaa79b; }
.sep { width: 12px; height: 15px; background: linear-gradient(var(--shade), var(--shade)) 6px 0 / 1px 100% no-repeat; }
.edge { width: 11px; height: 26px; background: linear-gradient(90deg, var(--shade) 1px, #fff 1px 2px, transparent 2px) 4px 0 no-repeat; }
.mode { width: 67px; text-align: center; font-size: 13px; white-space: nowrap; flex: none; }
.lbl { width: 47px; text-align: center; flex: none; }
.lbl-fill { width: 43px; }
.sample { width: 56px; height: 19px; flex: none; border: 1px solid; border-color: var(--shade) #fff #fff var(--shade); box-shadow: 1px 1px var(--shade); }
.sample-fill { background: #000; outline: 1px solid #fff; outline-offset: -2px; }
.sample-line { background: linear-gradient(#000, #000) center / 44px 2px no-repeat #fff; }

.main { display: grid; grid-template-columns: 52px minmax(0, 1fr) 235px; border-top: 1px solid #000; border-bottom: 1px solid #000; background: var(--face); min-height: 0; }

.tools { margin-left: 2px; border-left: 1px solid var(--dark); padding: 7px 2px 0 0; display: flex; flex-direction: column; overflow: hidden; }
.tgrip { height: 4px; margin: 0 1px 3px 4px; border: solid var(--shade); border-width: 1px 0; }
.pair { display: grid; grid-template-columns: 21px 21px; margin-left: 1px; }
.pair button { height: 19px; display: grid; place-items: center; }
.pair svg { width: 16px; height: 16px; }
.pair .on { background: #fff; border: 1px solid #316ac5; width: 19px; margin-left: 1px; }
.pair .more { background: linear-gradient(135deg, transparent 50%, #8d8a7d 50%) 100% 100% / 4px 4px no-repeat; }
.tsep { height: 5px; margin: 0 4px; background: linear-gradient(var(--shade), var(--shade)) 0 2px / 100% 1px no-repeat; }
.detail { height: 22px; width: 42px; }
.tend { height: 2px; margin-top: 1px; border-top: 1px solid var(--shade); border-bottom: 1px solid #fff; }

.editor { display: grid; grid-template-columns: 18px minmax(0, 1fr) 16px; grid-template-rows: 18px minmax(0, 1fr) 16px; border-left: 1px solid #000; min-width: 0; min-height: 0; }
.origin { margin: 1px; border: 1px solid var(--shade); background: #f1efe4; }
.origin svg { width: 14px; height: 14px; }
.hruler { display: flex; border-bottom: 1px solid var(--shade); background: #efede2; min-width: 0; }
.hruler svg { flex: 1; width: 0; height: 17px; }
.unit { width: 19px; height: 15px; margin: 1px 3px 0 0; border: 1px solid var(--shade); background: #f7f6ef; font: 10px/12px "Liberation Mono", monospace; }
.vruler { border-right: 1px solid var(--shade); background: #efede2; min-height: 0; overflow: hidden; }
.vruler svg { width: 17px; height: 100%; }
.hruler text, .vruler text { font-size: 11px; }
.canvas { background: #fff; overflow: hidden; min-height: 0; }
.drawing { width: 100%; height: 100%; }
.mid { text-anchor: middle; font-weight: 700; }
.full { font-feature-settings: normal; }

.sb { width: 16px; height: 16px; flex: none; background: var(--face); border: 1px solid; border-color: #fff var(--dark) var(--dark) #fff; display: grid; place-items: center; }
.sb svg { width: 9px; height: 9px; }
.vscroll { display: flex; flex-direction: column; border-left: 1px solid #fff; min-height: 0; padding-bottom: 3px; }
.track { background: var(--hatch); }
.vscroll .track { height: 54px; }
.thumb { flex: 1; background: var(--face); border: 1px solid; border-color: #fff var(--shade) var(--shade) #fff; }
.vscroll .sb { width: 15px; height: 17px; }
.hbar { grid-column: 1 / 3; display: flex; border-top: 1px solid var(--shade); white-space: nowrap; min-width: 0; }
.page, .zoom, .layer { height: 15px; line-height: 14px; font-size: 11px; font-family: "Liberation Mono", "Noto Sans CJK JP", monospace; border-right: 1px solid var(--shade); text-align: right; flex: none; background: #efede2; }
.page { width: 81px; padding-right: 3px; }
.zoom { width: 58px; display: flex; justify-content: space-between; align-items: center; padding: 0 5px 0 8px; border-left: 1px solid #fff; }
.zoom svg { width: 12px; height: 12px; }
.layer { width: 63px; padding-right: 4px; border-right: 1px solid #000; }
.hbar .sb { height: 15px; }
.track-l { width: 24px; }
.track-r { width: 24px; }
.split { width: 4px; border-left: 1px solid var(--shade); }
.corner { background: var(--face); border-left: 1px solid var(--shade); border-top: 1px solid var(--shade); }

.side { border-left: 1px solid #000; display: flex; flex-direction: column; min-height: 0; overflow: hidden; background: var(--shade); }
.side-head { height: 15px; flex: none; display: flex; align-items: center; gap: 5px; padding: 0 5px; border-bottom: 1px solid #000; color: #fff; }
.side-head i { width: 1px; height: 9px; background: #fff; }
.side-head h2 { flex: 1; line-height: 14px; font-size: 12px; white-space: nowrap; }
.dock { width: 12px; height: 10px; }
.pin { width: 10px; height: 10px; }
.side-body { flex: 1; display: flex; min-height: 0; }
.panels { flex: 1; min-width: 0; min-height: 0; display: flex; flex-direction: column; background: var(--face); padding: 3px 3px 0 2px; border-right: 1px solid #000; overflow: hidden; }
.clips { height: 23px; flex: none; display: flex; align-items: center; border: 1px solid var(--dark); padding-left: 5px; margin-bottom: 3px; background: #f0eee4; }
.clips .grip { height: 16px; margin-right: 12px; }
.clips button { width: 20px; }
.clips svg { width: 14px; height: 14px; }
.over { margin-left: 9px; font-size: 14px; }

.panel { border: 1px solid #000; flex: none; margin-bottom: 3px; }
.panel > header { height: 19px; background: var(--shade); border-bottom: 1px solid #000; display: flex; align-items: center; padding: 0 2px; }
.panel h3 { width: 58px; margin-left: 3px; font-size: 12px; white-space: nowrap; }
.pi { width: 14px; height: 14px; }
.x { margin-left: auto; font-size: 11px; line-height: 14px; width: 14px; }
.ptabs { display: flex; height: 17px; margin: 2px 0 -1px -5px; }
.ptabs button { width: 36px; border: 1px solid #000; border-bottom: 0; border-left: 0; background: repeating-conic-gradient(#aca899 0 25%, #d3d0c3 0 50%) 0 0 / 2px 2px; line-height: 15px; }
.ptabs .act { background: var(--face); height: 18px; border-left: 1px solid #fff; border-top-color: #fff; }
.body { padding: 5px 4px; }

.scroll-body { display: grid; grid-template-columns: minmax(0, 1fr) 17px; gap: 3px 5px; height: 101px; }
.preview { height: 72px; border: solid var(--dark); border-width: 1px 0 0 1px; background: #c0c0c0; overflow: hidden; }
.preview svg { width: 178px; height: 70px; }
.vnav button, .zb, .hnav button { border: 1px solid var(--dark); box-shadow: inset 1px 1px #fff; display: grid; place-items: center; }
.vnav button { width: 17px; height: 17px; }
.vnav .big { height: 27px; border-width: 0 1px; }
.vnav svg { width: 11px; height: 11px; }
.zoomrow { grid-column: 1 / 3; display: flex; align-items: center; }
.zoomrow svg { width: 9px; height: 9px; }
.spin { display: flex; width: 56px; height: 18px; background: #fff; border: solid var(--dark); border-width: 1px 0 0 1px; }
.spin input { width: 39px; text-align: right; padding-right: 1px; }
.spin span { background: var(--face); border: 1px solid var(--shade); margin-left: 1px; width: 15px; }
.spin span svg { width: 13px; height: 15px; }
.zoomrow label { width: 17px; text-align: center; font-size: 11px; }
.zb { width: 17px; height: 17px; }
.hnav { display: flex; margin-left: 10px; }
.hnav button { width: 18px; height: 17px; }
.hnav .wide { width: 27px; border-width: 1px 0; }
.hnav .wide svg { width: 11px; height: 11px; }

.color-body { height: 128px; display: flex; flex-direction: column; gap: 3px; padding-bottom: 4px; }
.row { display: flex; align-items: center; justify-content: space-between; }
.combo { position: relative; height: 20px; background: #fff; border: 1px solid; border-color: var(--dark) #fff #fff var(--dark); box-shadow: inset 1px 1px var(--shade); }
.combo select { appearance: none; display: block; width: 100%; height: 18px; padding-left: 1px; font-size: 12px; }
.combo::after { content: "▼"; position: absolute; right: 1px; top: 1px; bottom: 1px; width: 15px; background: var(--face); border: 1px solid; border-color: #fff var(--dark) var(--dark) #fff; font: 8px/15px "DejaVu Sans", sans-serif; text-align: center; pointer-events: none; }
.combo.off { background: var(--face); color: var(--shade); }
.combo.off select { opacity: 1; color: var(--shade); }
.w116 { width: 116px; }
.w81 { width: 81px; }
.w106 { width: 106px; }
.combo .line-sel { background: linear-gradient(#000, #000) 6px center / 84px 2px no-repeat; }
.pen { width: 19px; height: 20px; border: 1px solid var(--dark); }
.pen svg { width: 16px; height: 16px; }
.ends { justify-content: flex-start; }
.ends span { width: 31px; white-space: nowrap; }
.ends .join { margin-left: 8px; }
.seg { display: flex; border: 1px solid var(--dark); }
.seg button { width: 21px; height: 18px; border-right: 1px solid var(--dark); display: grid; place-items: center; }
.seg button:last-child { border-right: 0; width: 20px; }
.seg .down { background: repeating-conic-gradient(#c4c1b4 0 25%, #ebe9da 0 50%) 0 0 / 2px 2px; }
.seg svg { width: 16px; height: 14px; }
.palette { display: flex; justify-content: space-between; flex: 1; background: #fff; border: 1px solid; border-color: var(--dark) #fff #fff var(--dark); padding: 3px 1px 1px 4px; box-shadow: inset 1px 1px var(--shade); }
.swatches { display: grid; grid-template-columns: repeat(16, 9px); grid-auto-rows: 9px; gap: 2px; }
.swatches button { width: 9px; height: 9px; }
.swatches .cur { outline: 1px solid #000; box-shadow: inset 0 0 0 1px #fff; }
.swatches .plain { border: 1px solid #ccc; }
.xpbar { width: 15px; display: flex; flex-direction: column; }
.xpbar button { height: 15px; background: #c3d3fb; border-radius: 2px; display: grid; place-items: center; }
.xpbar svg { width: 10px; height: 10px; }
.xpbar i { height: 7px; background: #c3d3fb; border-radius: 1px; margin: 2px 0 auto; }

.coord-body { height: 101px; padding: 4px 4px 2px; display: flex; flex-direction: column; gap: 2px; }
.unitrow { justify-content: flex-start; height: 31px; }
.anchor { width: 36px; height: 30px; }
.unitrow label { margin: 0 6px 0 16px; white-space: nowrap; width: 24px; }
.unitsel select { background: linear-gradient(#316ac5, #316ac5) 1px 1px / 84px 16px no-repeat; color: #fff; }
.fields { display: grid; grid-template-columns: 12px 49px 24px 49px 7px 50px 11px; justify-content: space-between; align-items: center; row-gap: 2px; }
.fields label { text-align: center; }
.fields label:first-child, .fields .first { text-align: left; }
.fields input { width: 100%; min-width: 0; height: 18px; text-align: right; color: #aca899; background: var(--face); border: 1px solid; border-color: var(--dark) #fff #fff var(--dark); box-shadow: inset 1px 1px var(--shade); padding-right: 1px; }
.angles { grid-template-columns: 12px 34px 13px 25px 34px 12px 25px 35px 11px; }
.fields svg { width: 10px; height: 10px; margin: auto; }
.deg { text-align: center; }
.last { flex: 1; min-height: 0; margin-bottom: 0; border-bottom: 0; overflow: hidden; }
.opts { width: 196px; border-collapse: collapse; border: 1px solid var(--dark); table-layout: fixed; }
.opts th { text-align: left; font-weight: 400; padding: 0 8px; border-right: 1px solid var(--dark); line-height: 14px; }
.opts th:first-child { width: 130px; }
.last .body { padding-top: 4px; }

.vtabs { width: 18px; flex: none; padding: 25px 2px 0 0; display: flex; flex-direction: column; }
.vtabs button { position: relative; flex: none; width: 16px; padding: 6px 0 14px; background: #000; clip-path: polygon(0 12px, 4px 0, 100% 0, 100% calc(100% - 16px), 0 100%); writing-mode: vertical-rl; text-align: center; line-height: 15px; margin-top: -4px; font-size: 13px; font-feature-settings: normal; }
.vtabs button::before { content: ""; position: absolute; inset: 1px 1px 1px 0; background: #d3d0c3; clip-path: polygon(0 12px, 4px 0, 100% 0, 100% calc(100% - 16px), 0 100%); }
.vtabs .act::before { background: var(--face); }
.vtabs .act { font-weight: 700; }
.vtabs span { position: relative; }
.t1 { height: 93px; }
.t2 { height: 53px; }
.t3 { height: 57px; }
.t4 { height: 53px; }
.t5 { height: 76px; }
.t6 { height: 120px; }

.status { background: var(--face); border-top: 1px solid #fff; display: flex; align-items: center; padding: 0 2px 0 61px; white-space: nowrap; min-width: 0; }
.cell { border: 1px solid; border-color: var(--shade) #fff #fff var(--shade); padding: 0 2px; height: 18px; line-height: 16px; margin-right: 1px; }
.gap { margin-right: 10px; }
.msg { background: #fff; color: #000080; padding: 0 1px; margin-left: 6px; }
.hint { margin-left: auto; }
.resize { width: 13px; height: 13px; margin-left: 5px; align-self: flex-end; }
```
FILE: script.js
```js
// Rulers: 25 mm spans 47.2 px at the 50% zoom level.
const PX_PER_MM = 47.2 / 25;
const NS = "http://www.w3.org/2000/svg";

function add(svg, name, attrs, text) {
  const el = document.createElementNS(NS, name);
  for (const key in attrs) el.setAttribute(key, attrs[key]);
  if (text !== undefined) el.textContent = text;
  svg.appendChild(el);
}

function drawRuler(id, origin, from, vertical) {
  const svg = document.getElementById(id);
  const length = vertical ? svg.clientHeight : svg.clientWidth;
  for (let mm = from; origin + mm * PX_PER_MM < length; mm += 5) {
    const p = origin + Math.round(mm * PX_PER_MM) + 0.5;
    const major = mm % 25 === 0;
    const start = major ? 3 : 13;
    add(svg, "path", {
      d: vertical ? `M${start} ${p}H16` : `M${p} ${start}V17`,
      stroke: mm === 0 ? "#aca899" : "#000"
    });
    if (major && vertical) add(svg, "text", { transform: `translate(11 ${p + 2}) rotate(-90)`, "text-anchor": "end" }, mm);
    if (major && !vertical) add(svg, "text", { x: p + 2, y: 11 }, mm);
  }
  add(svg, "path", {
    d: vertical ? `M0 ${origin - 3}h3l3 3-3 3H0z` : `M${origin - 3} 0v3l3 3 3-3V0z`,
    fill: "#fff", stroke: "#8d8a7d"
  });
}
drawRuler("hruler", 73, -35, false);
drawRuler("vruler", 17, -5, true);
add(document.getElementById("hruler"), "path", { d: "M449.5 0V17", stroke: "#00f" });
add(document.getElementById("vruler"), "path", { d: "M1 140.5H13", stroke: "#00f" });
add(document.getElementById("vruler"), "path", { d: "M13 140.5H17", stroke: "#ff0" });

const COLORS = [
  "fff 000 f00 ff0 0f0 0ff 00f f0f c0c0c0 808080 800000 808000 008000 008080 000080 800080",
  "ddd ccc bbb aaa 888 777 444 222 fcc f99 f66 f00 c00 900 600 300",
  "fcc fc9 f93 f90 c60 930 600 300 ffc fc6 fc3 fc0 c90 960 630 330",
  "ffc ff9 ff3 ff0 cc0 990 660 330 cfc cf9 9f6 9f0 9c0 690 360 030"
].join(" ").split(" ");
const box = document.getElementById("swatches");
COLORS.forEach((c, i) => {
  const b = document.createElement("button");
  b.style.background = "#" + c;
  b.setAttribute("aria-label", "#" + c);
  if (i === 0) b.className = "plain";
  if (i === 1) b.className = "cur";
  box.appendChild(b);
});
```
